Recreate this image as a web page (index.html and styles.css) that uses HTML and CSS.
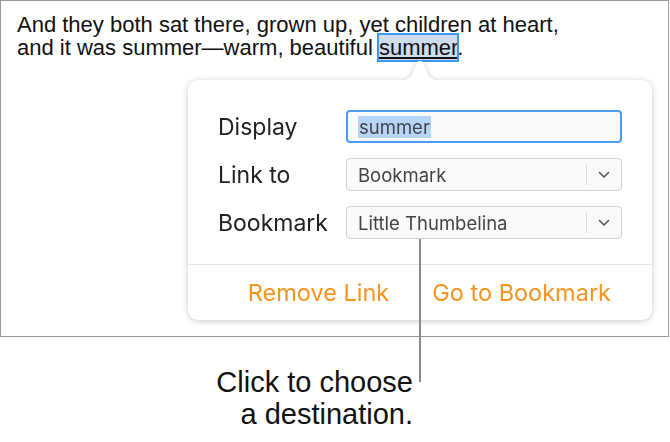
FILE: index.html
```html
<!DOCTYPE html>
<html lang="en">
<head>
    <meta charset="UTF-8">
    <meta name="viewport" content="width=device-width, initial-scale=1.0">
    <title>Link popover</title>
    <link rel="stylesheet" href="styles.css">
</head>
<body>
    <div class="page">
        <div class="doc">
            <p class="text">And they both sat there, grown up, yet children at heart,<br>and it was summer—warm, beautiful <span class="sel">summer</span>.</p>

            <div class="popover">
                <svg class="arrow" width="48" height="22" viewBox="0 0 48 22">
                    <path d="M0 21 C8 21 12 20 16 15 L21 3 C22.5 0 25.5 0 27 3 L32 15 C36 20 40 21 48 21 L48 22 L0 22 Z" fill="#fff"/>
                </svg>
                <div class="panel">
                    <div class="fields">
                        <div class="row">
                            <span class="label">Display</span>
                            <div class="input focused"><span class="hl">summer</span></div>
                        </div>
                        <div class="row">
                            <span class="label">Link to</span>
                            <div class="input select">
                                <span class="value">Bookmark</span>
                                <span class="chev">
                                    <svg width="12" height="8" viewBox="0 0 12 8"><path d="M1.5 1.5 L6 6 L10.5 1.5" fill="none" stroke="#555" stroke-width="1.6" stroke-linecap="round" stroke-linejoin="round"/></svg>
                                </span>
                            </div>
                        </div>
                        <div class="row">
                            <span class="label">Bookmark</span>
                            <div class="input select">
                                <span class="value">Little Thumbelina</span>
                                <span class="chev">
                                    <svg width="12" height="8" viewBox="0 0 12 8"><path d="M1.5 1.5 L6 6 L10.5 1.5" fill="none" stroke="#555" stroke-width="1.6" stroke-linecap="round" stroke-linejoin="round"/></svg>
                                </span>
                            </div>
                        </div>
                    </div>
                    <div class="actions">
                        <span class="action">Remove Link</span>
                        <span class="action">Go to Bookmark</span>
                    </div>
                </div>
            </div>
        </div>

        <p class="callout">Click to choose<br>a destination.</p>
        <div class="leader"></div>
    </div>
</body>
</html>
```

FILE: styles.css
```css
body {
    margin: 0;
    padding: 0;
    background-color: #fff;
}

.page {
    position: relative;
    width: 670px;
    height: 442px;
}

.doc {
    box-sizing: border-box;
    width: 669px;
    height: 337px;
    border: 1px solid #9a9a9a;
    padding: 12px 0 0 16px;
    background-color: #fff;
}

.text {
    margin: 0;
    font-family: "Liberation Sans", Arial, sans-serif;
    font-size: 22px;
    line-height: 23px;
    color: #111;
}

.sel {
    background-color: #cfdcee;
    outline: 2px solid #3d97f5;
    outline-offset: 0;
    text-decoration: underline;
    text-decoration-thickness: 2px;
    text-underline-offset: 2px;
}

.popover {
    position: relative;
    width: 464px;
    margin: 21px 0 0 171px;
    filter: drop-shadow(0 1px 3px rgba(0, 0, 0, 0.22));
}

.arrow {
    position: absolute;
    top: -20px;
    left: 208px;
    display: block;
}

.panel {
    background-color: #fff;
    border-radius: 10px;
    font-family: Inter, "Noto Sans", sans-serif;
}

.fields {
    display: flex;
    flex-direction: column;
    gap: 15px;
    padding: 30px 30px 25px 30px;
    border-bottom: 1px solid #e4e4e4;
}

.row {
    display: flex;
    align-items: center;
    height: 33px;
}

.label {
    width: 128px;
    flex-shrink: 0;
    font-size: 23px;
    color: #222;
}

.input {
    box-sizing: border-box;
    flex: 1;
    height: 33px;
    display: flex;
    align-items: center;
    padding-left: 11px;
    border: 1px solid #d2d2d2;
    border-radius: 4px;
    background-color: #fafafa;
    font-size: 18.5px;
    color: #444;
}

.input.focused {
    border: 2px solid #4a9cf2;
    padding-left: 10px;
}

.hl {
    background-color: #b5d5fb;
    padding: 0 1px;
}

.select {
    justify-content: space-between;
}

.chev {
    display: flex;
    align-items: center;
    justify-content: center;
    width: 34px;
    height: 21px;
    border-left: 1px solid #dcdcdc;
}

.actions {
    display: flex;
    justify-content: flex-end;
    gap: 43px;
    height: 55px;
    align-items: center;
    padding-right: 41px;
}

.action {
    font-size: 23.5px;
    color: #f7941d;
}

.callout {
    margin: 0;
    width: 413px;
    padding-top: 29px;
    text-align: right;
    font-family: "Liberation Sans", Arial, sans-serif;
    font-size: 29px;
    line-height: 32px;
    color: #111;
}

.leader {
    position: absolute;
    left: 419px;
    top: 239px;
    width: 2px;
    height: 143px;
    background-color: #8a8a8a;
}
```
